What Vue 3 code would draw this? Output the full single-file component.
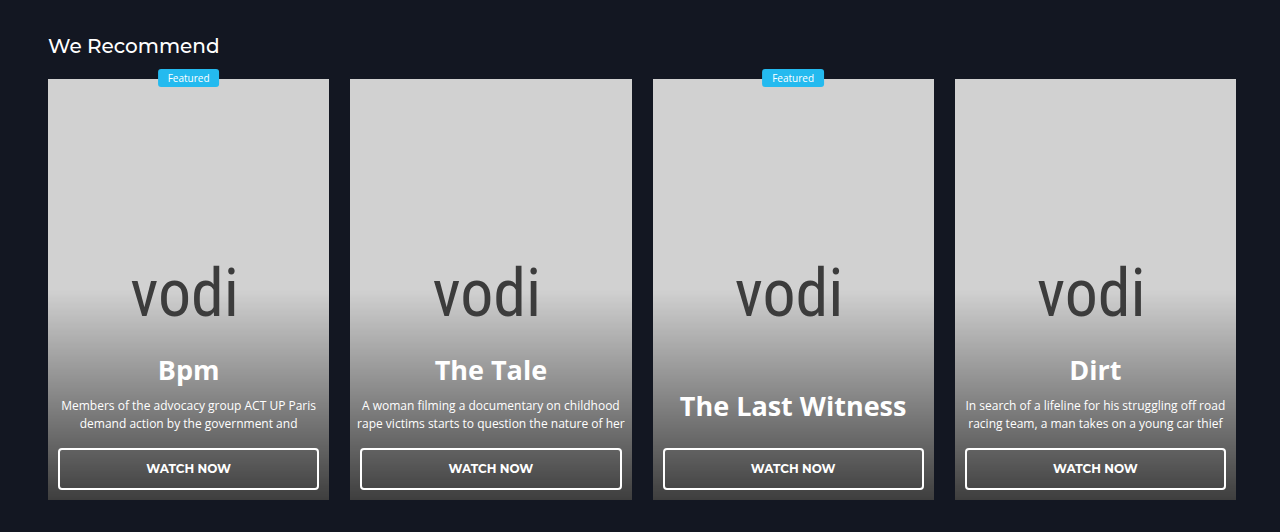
<script setup>
const films = [
  { title: 'Bpm', featured: true, text: 'Members of the advocacy group ACT UP Paris demand action by the government and' },
  { title: 'The Tale', featured: false, text: 'A woman filming a documentary on childhood rape victims starts to question the nature of her' },
  { title: 'The Last Witness', featured: true, text: '' },
  { title: 'Dirt', featured: false, text: 'In search of a lifeline for his struggling off road racing team, a man takes on a young car thief' },
]
</script>

<template>
  <section class="recommend">
    <h2 class="heading">We Recommend</h2>
    <div class="grid">
      <article v-for="film in films" :key="film.title" class="card">
        <span v-if="film.featured" class="badge">Featured</span>
        <span class="brand">vodi</span>
        <div class="content">
          <h3 class="title">{{ film.title }}</h3>
          <p v-if="film.text" class="text">{{ film.text }}</p>
          <button type="button" class="watch">WATCH NOW</button>
        </div>
      </article>
    </div>
  </section>
</template>

<style>
html,
body {
  background: #131722;
}
</style>

<style scoped>
.recommend {
  padding: 32px 44px 32px 48px;
  color: #fff;
  font-family: "Open Sans", "Noto Sans", sans-serif;
}
.heading {
  margin: 0 0 19px;
  font: 500 20px/28px Montserrat, Inter, sans-serif;
}
.grid {
  display: grid;
  grid-template-columns: repeat(4, minmax(0, 1fr));
  gap: 21px;
}
.card {
  position: relative;
  display: flex;
  flex-direction: column;
  justify-content: flex-end;
  aspect-ratio: 281 / 421;
  box-sizing: border-box;
  background: linear-gradient(to bottom, transparent 50%, rgba(0, 0, 0, 0.7) 100%), #d1d1d1;
}
.badge {
  position: absolute;
  top: -10px;
  left: 50%;
  transform: translateX(-50%);
  padding: 0 10px;
  border-radius: 3px;
  background: #24baef;
  font-size: 10px;
  line-height: 18px;
}
.brand {
  position: absolute;
  inset: 8px 8px 0 0;
  display: flex;
  align-items: center;
  justify-content: center;
  color: #3c3c3c;
  font: 400 66px/80px "Roboto Condensed", "Liberation Sans Narrow", "Arial Narrow", Roboto, "Liberation Sans", sans-serif;
}
.content {
  position: relative;
  display: flex;
  flex-direction: column;
  padding: 10px;
  text-align: center;
}
.title {
  margin: 0 0 9px;
  font-size: 27px;
  font-weight: 700;
  line-height: 36px;
}
.text {
  margin: 0 -4px;
  font-size: 12px;
  line-height: 18px;
}
.watch {
  margin-top: 15px;
  padding: 10px;
  border: 2px solid #fff;
  border-radius: 4px;
  background: transparent;
  color: #fff;
  font: 700 12px/18px Montserrat, Inter, sans-serif;
  cursor: pointer;
}
</style>
